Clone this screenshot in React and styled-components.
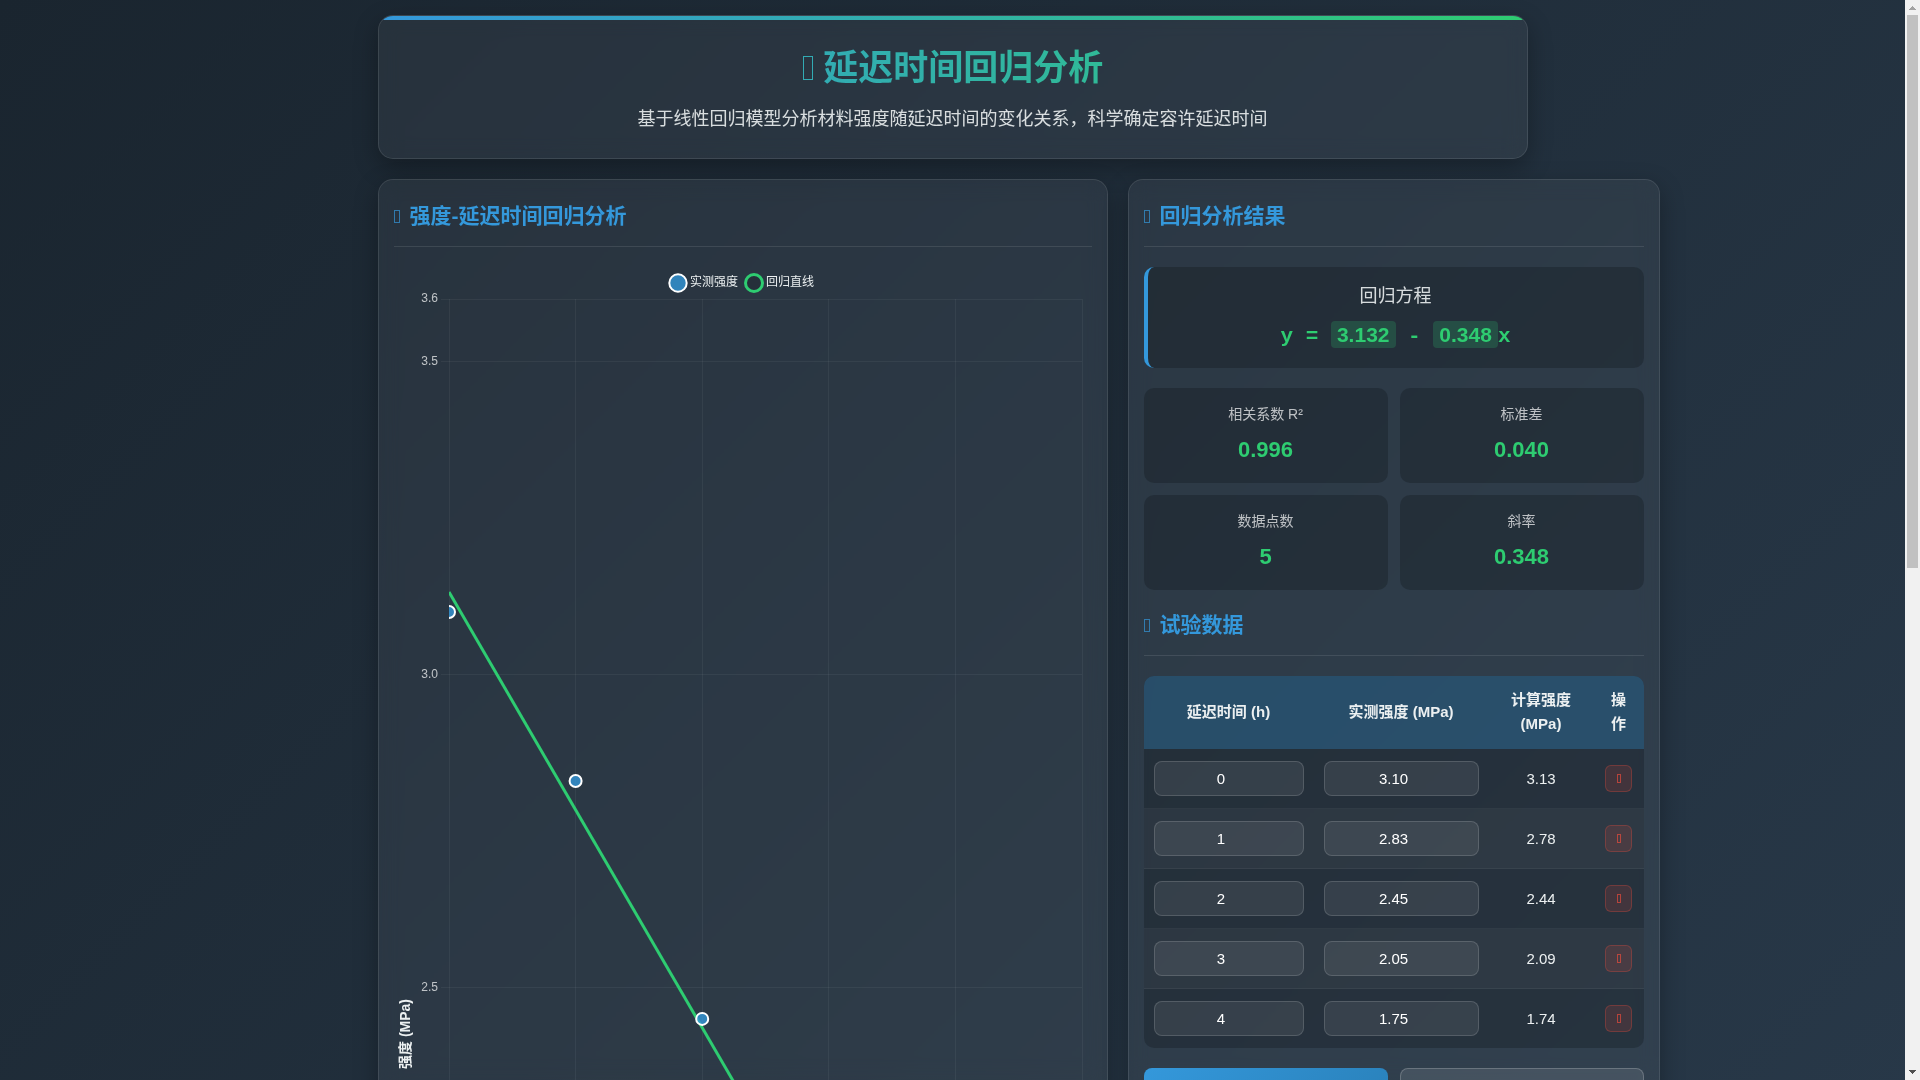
import React, { useState } from 'react'
import styled, { createGlobalStyle } from 'styled-components'

const slope = 0.348
const intercept = 3.132

const initialRows = [
  { time: '0', measured: '3.10' },
  { time: '1', measured: '2.83' },
  { time: '2', measured: '2.45' },
  { time: '3', measured: '2.05' },
  { time: '4', measured: '1.75' },
]

const stats = [
  { label: '相关系数 R²', value: '0.996' },
  { label: '标准差', value: '0.040' },
  { label: '数据点数', value: '5' },
  { label: '斜率', value: '0.348' },
]

const chart = { left: 55, right: 688, top: 32, bottom: 1502, max: 3.6, perUnit: 626, xMax: 5 }
const toX = (t) => chart.left + (t * (chart.right - chart.left)) / chart.xMax
const toY = (s) => chart.top + (chart.max - s) * chart.perUnit

const App = () => {
  const [rows, setRows] = useState(initialRows)
  const [scroll, setScroll] = useState({ offset: 0, size: 0.527 })

  function handleScroll(e) {
    const { scrollTop, scrollHeight, clientHeight } = e.target
    setScroll({ offset: scrollTop / scrollHeight, size: clientHeight / scrollHeight })
  }

  function updateRow(index, key, value) {
    setRows(rows.map((row, i) => (i === index ? { ...row, [key]: value } : row)))
  }

  function removeRow(index) {
    setRows(rows.filter((row, i) => i !== index))
  }

  function addRow() {
    setRows([...rows, { time: String(rows.length), measured: '1.00' }])
  }

  return (
    <Shell>
      <GlobalStyle />
      <Viewport onScroll={handleScroll}>
        <Backdrop>
          <Page>
            <Header>
              <Title>
                <TitleIcon /> 延迟时间回归分析
              </Title>
              <Subtitle>基于线性回归模型分析材料强度随延迟时间的变化关系，科学确定容许延迟时间</Subtitle>
            </Header>
            <Columns>
              <Panel>
                <SectionTitle>强度-延迟时间回归分析</SectionTitle>
                <Chart rows={rows} />
              </Panel>
              <Panel>
                <SectionTitle>回归分析结果</SectionTitle>
                <Equation>
                  <EquationLabel>回归方程</EquationLabel>
                  <Formula>
                    y = <Coefficient>{intercept}</Coefficient> - <Coefficient>{slope}</Coefficient>x
                  </Formula>
                </Equation>
                <StatGrid>
                  {stats.map((stat) => (
                    <Stat key={stat.label}>
                      <StatLabel>{stat.label}</StatLabel>
                      <StatValue>{stat.value}</StatValue>
                    </Stat>
                  ))}
                </StatGrid>
                <SectionTitle>试验数据</SectionTitle>
                <Table>
                  <colgroup>
                    <Col $width='34%' />
                    <Col $width='35%' />
                    <Col $width='21%' />
                    <Col $width='10%' />
                  </colgroup>
                  <thead>
                    <tr>
                      <th>延迟时间 (h)</th>
                      <th>实测强度 (MPa)</th>
                      <th>计算强度 (MPa)</th>
                      <th>操作</th>
                    </tr>
                  </thead>
                  <tbody>
                    {rows.map((row, index) => (
                      <tr key={index}>
                        <td>
                          <Field
                            type='number'
                            aria-label='延迟时间 (h)'
                            value={row.time}
                            onChange={(e) => updateRow(index, 'time', e.target.value)}
                          />
                        </td>
                        <td>
                          <Field
                            type='number'
                            step='0.01'
                            aria-label='实测强度 (MPa)'
                            value={row.measured}
                            onChange={(e) => updateRow(index, 'measured', e.target.value)}
                          />
                        </td>
                        <td>{(intercept - slope * row.time).toFixed(2)}</td>
                        <td>
                          <DeleteButton aria-label='删除' onClick={() => removeRow(index)}>
                            <DeleteIcon />
                          </DeleteButton>
                        </td>
                      </tr>
                    ))}
                  </tbody>
                </Table>
                <Actions>
                  <Button $primary onClick={addRow}>
                    添加数据
                  </Button>
                  <Button onClick={() => setRows(initialRows)}>重置数据</Button>
                </Actions>
              </Panel>
            </Columns>
          </Page>
        </Backdrop>
      </Viewport>
      <Scrollbar scroll={scroll} />
    </Shell>
  )
}

export default App

const SectionTitle = ({ children }) => (
  <Heading>
    <HeadingIcon />
    {children}
  </Heading>
)

const Scrollbar = ({ scroll }) => (
  <ScrollbarBox aria-hidden='true'>
    <Arrow viewBox='0 0 15 15'>
      <path d='M7 6h1v1h1v1h1v1h1v1H4V9h1V8h1V7h1z' fill='#a3a3a3' />
    </Arrow>
    <Track>
      <Thumb style={{ marginTop: `${scroll.offset * 100}%`, height: `${scroll.size * 100}%` }} />
    </Track>
    <Arrow viewBox='0 0 15 15'>
      <path d='M4 5h7v1h-1v1H9v1H8v1H7V8H6V7H5V6H4z' fill='#505050' />
    </Arrow>
  </ScrollbarBox>
)

const Chart = ({ rows }) => (
  <ChartSvg viewBox='0 0 698 1560' role='img' aria-label='强度-延迟时间回归分析'>
    <defs>
      <clipPath id='plot'>
        <rect x={chart.left} y={chart.top} width={chart.right - chart.left} height={chart.bottom - chart.top} />
      </clipPath>
    </defs>

    <LegendMark cx='284' cy='16' r='8.7' />
    <LegendText x='296' y='19'>
      实测强度
    </LegendText>
    <LegendMark $line cx='360' cy='16' r='8.5' />
    <LegendText x='372' y='19'>
      回归直线
    </LegendText>

    {[3.6, 3.5, 3, 2.5, 2, 1.5].map((value) => (
      <g key={value}>
        <GridLine x1={chart.left - 8} x2={chart.right} y1={toY(value)} y2={toY(value)} />
        <Tick x='44' y={toY(value) + 3} textAnchor='end'>
          {value.toFixed(1)}
        </Tick>
      </g>
    ))}
    {[0, 1, 2, 3, 4, 5].map((value) => (
      <g key={value}>
        <GridLine x1={toX(value)} x2={toX(value)} y1={chart.top} y2={chart.bottom + 8} />
        <Tick x={toX(value)} y={chart.bottom + 22} textAnchor='middle'>
          {value}
        </Tick>
      </g>
    ))}

    <g clipPath='url(#plot)'>
      <FitLine x1={toX(0)} y1={toY(intercept)} x2={toX(5)} y2={toY(intercept - slope * 5)} />
      {rows.map((row, index) => (
        <Point key={index} cx={toX(row.time)} cy={toY(row.measured)} r='6' />
      ))}
    </g>

    <AxisTitle transform='translate(16 767) rotate(-90)'>强度 (MPa)</AxisTitle>
    <AxisTitle x='371' y='1550'>
      延迟时间 (h)
    </AxisTitle>
  </ChartSvg>
)

const GlobalStyle = createGlobalStyle`
  * {
    box-sizing: border-box;
    margin: 0;
    padding: 0;
  }

  body {
    background: #1a252f;
    color: #ecf0f1;
    font-family: 'Liberation Sans', 'Noto Sans CJK SC', sans-serif;
    font-size: 16px;
    line-height: 26px;
  }
`

const Shell = styled.div`
  display: flex;
  height: 100vh;
`

const Viewport = styled.div`
  flex: 1;
  min-width: 0;
  overflow-y: auto;
  scrollbar-width: none;
`

const Backdrop = styled.div`
  min-height: 190vh;
  background: linear-gradient(135deg, #1a252f 0%, #2c3e50 100%);
`

const Page = styled.div`
  max-width: 1200px;
  margin: 0 auto;
  padding: 15px 25px;
`

const ScrollbarBox = styled.div`
  display: flex;
  flex-direction: column;
  width: 15px;
  background: #f1f1f1;
`

const Arrow = styled.svg`
  display: block;
  width: 15px;
  height: 15px;
`

const Track = styled.div`
  flex: 1;
  padding: 0 2px;
`

const Thumb = styled.div`
  background: #c1c1c1;
`

const Card = styled.section`
  background: rgba(255, 255, 255, 0.05);
  border: 1px solid rgba(255, 255, 255, 0.1);
  border-radius: 15px;
  box-shadow: 0 8px 25px rgba(0, 0, 0, 0.3);
  backdrop-filter: blur(10px);
`

const Header = styled(Card).attrs({ as: 'header' })`
  position: relative;
  overflow: hidden;
  margin-bottom: 20px;
  padding: 25px;
  text-align: center;

  &::before {
    content: '';
    position: absolute;
    top: 0;
    left: 0;
    right: 0;
    height: 4px;
    background: linear-gradient(90deg, #3498db, #2ecc71);
  }
`

const Title = styled.h1`
  margin-bottom: 10px;
  background: linear-gradient(90deg, #3498db, #2ecc71);
  background-clip: text;
  color: transparent;
  font-size: 35px;
  line-height: 54px;
`

const Subtitle = styled.p`
  font-size: 18px;
  line-height: 28px;
  opacity: 0.9;
`

const Columns = styled.main`
  display: grid;
  grid-template-columns: minmax(730px, 3fr) minmax(532px, 2fr);
  gap: 20px;
`

const Panel = styled(Card)`
  padding: 20px 15px;
`

const Heading = styled.h2`
  display: flex;
  align-items: center;
  gap: 10px;
  margin-bottom: 20px;
  padding-bottom: 14px;
  border-bottom: 1px solid rgba(255, 255, 255, 0.1);
  color: #3498db;
  font-size: 21px;
  line-height: 32px;
`

const BoxIcon = styled.span`
  display: inline-block;
  border: 1px solid currentColor;
`

const TitleIcon = styled(BoxIcon)`
  width: 10px;
  height: 24px;
  margin: 0 1px;
  color: #32abb4;
`

const HeadingIcon = styled(BoxIcon)`
  width: 6px;
  height: 13px;
  opacity: 0.7;
`

const DeleteIcon = styled(BoxIcon)`
  width: 4px;
  height: 9px;
  opacity: 0.7;
`

const ChartSvg = styled.svg`
  display: block;
  width: 100%;
`

const GridLine = styled.line`
  stroke: rgba(255, 255, 255, 0.05);
  shape-rendering: crispEdges;
`

const Tick = styled.text`
  fill: rgba(255, 255, 255, 0.7);
  font-size: 12px;
`

const LegendText = styled.text`
  fill: #ecf0f1;
  font-size: 12px;
`

const LegendMark = styled.circle`
  fill: ${({ $line }) => ($line ? 'rgba(0, 0, 0, 0.1)' : 'rgba(52, 152, 219, 0.8)')};
  stroke: ${({ $line }) => ($line ? '#2ecc71' : '#fff')};
  stroke-width: ${({ $line }) => ($line ? 3 : 2)};
`

const FitLine = styled.line`
  stroke: #2ecc71;
  stroke-width: 3;
`

const Point = styled.circle`
  fill: rgba(52, 152, 219, 0.8);
  stroke: #fff;
  stroke-width: 2;
`

const AxisTitle = styled.text`
  fill: #ecf0f1;
  font-size: 14px;
  font-weight: bold;
  text-anchor: middle;
`

const Equation = styled.div`
  margin-bottom: 20px;
  padding: 15px;
  background: rgba(0, 0, 0, 0.2);
  border-left: 4px solid #3498db;
  border-radius: 10px;
  text-align: center;
`

const EquationLabel = styled.div`
  margin-bottom: 8px;
  font-size: 18px;
  line-height: 28px;
  opacity: 0.9;
`

const Formula = styled.div`
  color: #2ecc71;
  font-family: 'Liberation Mono', monospace;
  font-size: 21px;
  font-weight: bold;
  line-height: 33px;
`

const Coefficient = styled.span`
  padding: 2px 6px;
  background: rgba(46, 204, 113, 0.2);
  border-radius: 4px;
  font-family: 'Liberation Sans', sans-serif;
`

const StatGrid = styled.div`
  display: grid;
  grid-template-columns: 1fr 1fr;
  gap: 12px;
  margin-bottom: 19px;
`

const Stat = styled.div`
  padding: 15px;
  background: rgba(0, 0, 0, 0.2);
  border-radius: 10px;
  text-align: center;
`

const StatLabel = styled.div`
  margin-bottom: 6px;
  color: rgba(255, 255, 255, 0.7);
  font-size: 14px;
  line-height: 23px;
`

const StatValue = styled.div`
  color: #2ecc71;
  font-size: 22px;
  font-weight: bold;
  line-height: 36px;
`

const Table = styled.table`
  width: 100%;
  margin-bottom: 20px;
  overflow: hidden;
  background: rgba(0, 0, 0, 0.2);
  border-radius: 10px;
  border-spacing: 0;
  table-layout: fixed;
  font-size: 15px;
  text-align: center;

  th,
  td {
    padding: 12px 10px;
    line-height: 24px;
  }

  th {
    padding: 12px 12px 13px;
    background: rgba(52, 152, 219, 0.3);
  }

  tbody tr:nth-child(even) {
    background: rgba(255, 255, 255, 0.04);
  }

  tbody tr:not(:last-child) td {
    border-bottom: 1px solid rgba(255, 255, 255, 0.05);
  }
`

const Col = styled.col`
  width: ${({ $width }) => $width};
`

const Field = styled.input`
  display: block;
  width: 100%;
  height: 35px;
  padding: 8px;
  background: rgba(255, 255, 255, 0.08);
  border: 1px solid rgba(255, 255, 255, 0.15);
  border-radius: 8px;
  color: #fff;
  font-family: inherit;
  font-size: 15px;
  text-align: center;
`

const DeleteButton = styled.button`
  display: inline-flex;
  align-items: center;
  justify-content: center;
  width: 27px;
  height: 27px;
  background: rgba(231, 76, 60, 0.15);
  border: 1px solid rgba(231, 76, 60, 0.3);
  border-radius: 6px;
  color: #e74c3c;
  vertical-align: middle;
  cursor: pointer;
`

const Actions = styled.div`
  display: grid;
  grid-template-columns: 1fr 1fr;
  gap: 12px;
`

const Button = styled.button`
  height: 48px;
  background: ${({ $primary }) => ($primary ? 'linear-gradient(135deg, #3498db, #2980b9)' : 'rgba(255, 255, 255, 0.1)')};
  border: ${({ $primary }) => ($primary ? 'none' : '1px solid rgba(255, 255, 255, 0.2)')};
  border-radius: 8px;
  color: #fff;
  font-family: inherit;
  font-size: 16px;
  font-weight: bold;
  cursor: pointer;
`
